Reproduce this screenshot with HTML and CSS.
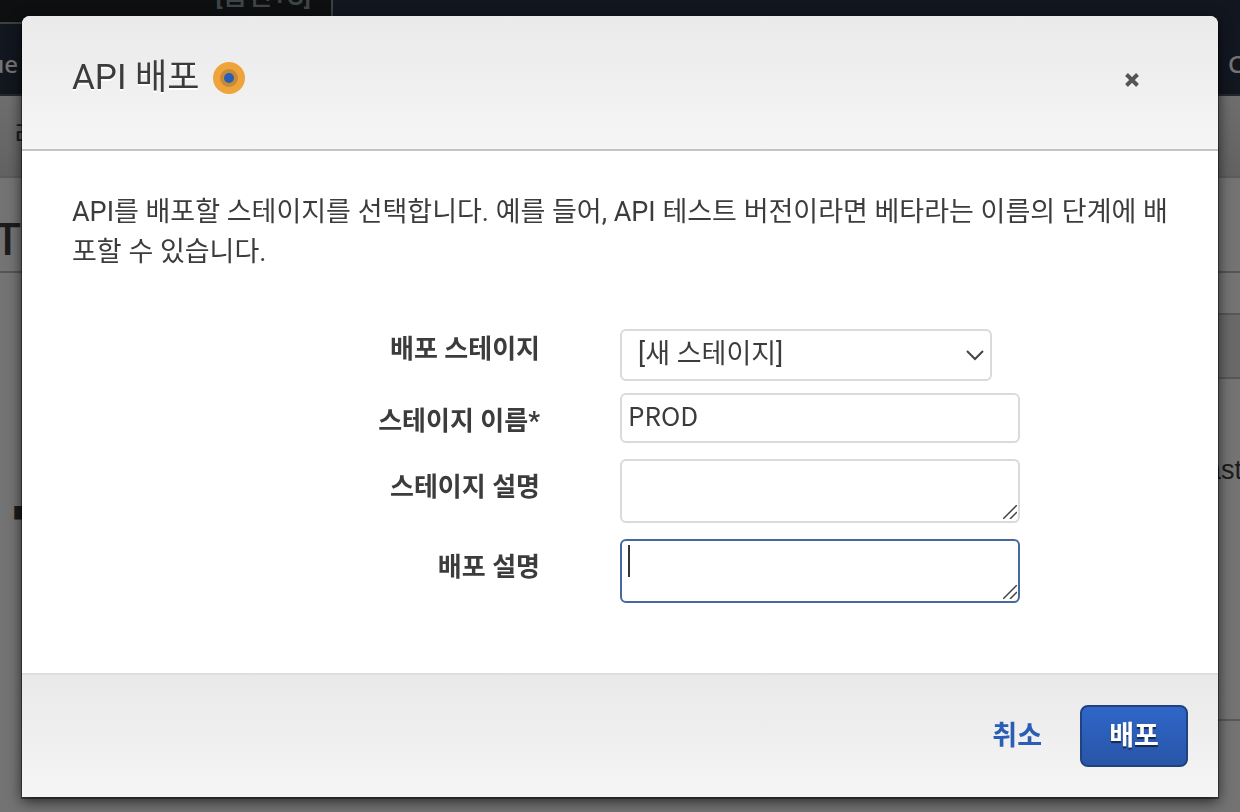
FILE: index.html
```html
<!DOCTYPE html>
<html lang="ko">
<head>
<meta charset="utf-8">
<title>API 배포</title>
<link rel="stylesheet" href="styles.css">
</head>
<body>
<div class="console">
  <div class="topbar">
    <div class="search"><span>[옵션+S]</span></div>
  </div>
  <div class="nav"><span class="nav-start">ue</span><span class="nav-end">C</span></div>
  <div class="toolbar"><span>리</span></div>
  <div class="titlebar"><span>T</span></div>
  <div class="columns">
    <div class="side"><span>▪</span></div>
    <div class="panel">
      <div class="panel-gap"></div>
      <div class="panel-head"></div>
      <div class="panel-body"><span>ast</span></div>
      <div class="panel-foot"></div>
    </div>
  </div>
</div>

<div class="overlay">
  <form class="dialog" role="dialog" aria-labelledby="dialog-title">
    <header class="dialog-header">
      <h1 id="dialog-title">API 배포</h1>
      <svg class="beacon" viewBox="0 0 32 32" aria-hidden="true">
        <circle cx="16" cy="16" r="16" fill="#eea43b"/>
        <circle cx="16" cy="16" r="9" fill="#c58b38"/>
        <circle cx="16" cy="16" r="5" fill="#2a5db4"/>
      </svg>
      <button class="close" type="button" aria-label="닫기">
        <svg viewBox="0 0 16 16" aria-hidden="true">
          <path d="M3 4l10 10M13 4L3 14" stroke="#fff" stroke-width="4"/>
          <path d="M2.500 2.500l11 11M13.500 2.500l-11 11" stroke="#555" stroke-width="4"/>
        </svg>
      </button>
    </header>
    <div class="dialog-body">
      <p class="intro">API를 배포할 스테이지를 선택합니다. 예를 들어, API 테스트 버전이라면 베타라는 이름의 단계에 배포할 수 있습니다.</p>
      <div class="fields">
        <div class="row row-select">
          <label for="stage">배포 스테이지</label>
          <div class="control select-wrap">
            <select id="stage"><option>[새 스테이지]</option></select>
            <svg class="chevron" viewBox="0 0 18 12" aria-hidden="true"><path d="M1 2l8 8 8-8" fill="none" stroke="#444" stroke-width="2"/></svg>
          </div>
        </div>
        <div class="row">
          <label for="name">스테이지 이름*</label>
          <div class="control"><input id="name" type="text" value="PROD"></div>
        </div>
        <div class="row">
          <label for="stage-desc">스테이지 설명</label>
          <div class="control">
            <textarea id="stage-desc"></textarea>
            <svg class="grip" viewBox="0 0 14 14" aria-hidden="true"><path d="M0 14L14 0M7 14l7-7" stroke="#444" stroke-width="1.500"/></svg>
          </div>
        </div>
        <div class="row">
          <label for="deploy-desc">배포 설명</label>
          <div class="control">
            <textarea id="deploy-desc" class="active"></textarea>
            <span class="caret"></span>
            <svg class="grip" viewBox="0 0 14 14" aria-hidden="true"><path d="M0 14L14 0M7 14l7-7" stroke="#444" stroke-width="1.500"/></svg>
          </div>
        </div>
      </div>
    </div>
    <footer class="dialog-footer">
      <button class="cancel" type="button">취소</button>
      <button class="deploy" type="submit">배포</button>
    </footer>
  </form>
</div>
</body>
</html>
```
FILE: styles.css
```css
* { box-sizing: border-box; }

body {
  margin: 0;
  height: 100vh;
  overflow: hidden;
  background: #737373;
  color: #3c3c3c;
  font: 27px/40px Roboto, "Noto Sans CJK KR", sans-serif;
}

/* Dimmed console behind the dialog */
.console {
  display: flex;
  flex-direction: column;
  height: 100%;
  color: #1c1c1c;
}
.topbar { height: 24px; flex: none; background: #12161f; }
.search {
  display: flex;
  align-items: flex-end;
  justify-content: flex-end;
  width: 333px;
  height: 24px;
  padding: 0 20px 10px 0;
  overflow: hidden;
  background: #0d0f10;
  border: solid #3b4041;
  border-width: 0 2px 2px 0;
  color: #3f4546;
  font-weight: 500;
  line-height: 32px;
}
.nav {
  display: flex;
  justify-content: space-between;
  flex: none;
  height: 72px;
  padding-top: 20px;
  background: #12161f;
  border-bottom: 2px solid #23262b;
  color: #747474;
  font-family: "Noto Sans", sans-serif;
  font-size: 24px;
  font-weight: 500;
}
.nav-start, .side { display: flex; justify-content: flex-end; }
.nav-start { width: 18px; }
.nav-end { width: 12px; }
.toolbar {
  flex: none;
  height: 82px;
  padding: 20px 0 0 14px;
  background: linear-gradient(#6e6e6e, #626262);
  border-bottom: 2px solid #5c5c5c;
}
.titlebar {
  flex: none;
  height: 95px;
  padding-top: 42px;
  border-bottom: 2px solid #555;
  font-size: 44px;
  font-weight: 500;
}
.titlebar span { display: flex; justify-content: flex-end; width: 21px; }
.columns { display: flex; justify-content: space-between; flex: 1; }
.side { width: 30px; padding-top: 218px; font-family: "DejaVu Sans", sans-serif; }
.panel { display: flex; flex-direction: column; width: 40px; }
.panel-gap { height: 42px; border-bottom: 2px solid #575757; }
.panel-head { height: 64px; background: #696969; border-bottom: 2px solid #575757; }
.panel-body { height: 342px; padding-top: 71px; padding-left: 6px; border-bottom: 2px solid #575757; font-family: "Liberation Sans", sans-serif; }
.panel-foot { flex: 1; }

/* Dialog */
.overlay { position: fixed; inset: 0; padding: 16px 22px; }
.dialog {
  background: #fff;
  border-radius: 8px 8px 0 0;
  box-shadow: 0 1px 0 1px rgba(0, 0, 0, .4), 0 4px 14px rgba(0, 0, 0, .7);
}
.dialog-header {
  display: flex;
  align-items: flex-start;
  height: 135px;
  padding: 40px 78px 0 50px;
  background: linear-gradient(#eaeaea, #f5f5f5);
  border-bottom: 2px solid #c4c4c4;
  border-radius: 8px 8px 0 0;
}
h1 {
  margin: 0;
  font-size: 35px;
  font-weight: normal;
  line-height: 44px;
  text-shadow: 0 2px 0 #fff;
}
.beacon { width: 32px; height: 32px; margin: 6px 0 0 13px; }
button { padding: 0; border: 0; background: none; font: inherit; cursor: pointer; }
.close { display: flex; margin: 16px 0 0 auto; }
.close svg { width: 16px; height: 16px; }
.dialog-body { padding: 41px 50px 70px; }
.intro { margin: 0 0 57px; }
.fields { display: flex; flex-direction: column; gap: 16px; }
.row { display: grid; grid-template-columns: 468fr 548fr; column-gap: 80px; align-items: start; }
.row-select { margin-bottom: -4px; }
label { padding-top: 8px; font-size: 26px; font-weight: bold; text-align: right; }
.row-select label { padding-top: 0; }
.control { display: flex; position: relative; width: 400px; max-width: 100%; }
.select-wrap { width: 372px; }
select, input, textarea {
  width: 100%;
  margin: 0;
  border: 2px solid #dadada;
  border-radius: 6px;
  outline: 0;
  background: #fff;
  color: #3c3c3c;
  font: inherit;
}
select { height: 52px; padding: 0 40px 2px 16px; appearance: none; }
input { height: 50px; padding: 0 6px 8px; font-family: "Noto Sans CJK KR", sans-serif; font-size: 26px; }
textarea { height: 64px; padding: 2px 6px; resize: none; }
textarea.active { border-color: #466a9f; }
.chevron { position: absolute; right: 8px; top: 20px; width: 18px; height: 12px; pointer-events: none; }
.grip { position: absolute; right: 3px; bottom: 4px; width: 14px; height: 14px; pointer-events: none; }
.caret { position: absolute; left: 8px; top: 6px; width: 2px; height: 32px; background: #333; }
.dialog-footer {
  display: flex;
  align-items: center;
  justify-content: flex-end;
  gap: 38px;
  padding: 30px;
  background: linear-gradient(#e9e9e9, #f5f5f5);
  border-top: 2px solid #dedede;
}
.cancel { color: #2a5db4; font-weight: bold; }
.deploy {
  width: 108px;
  height: 62px;
  border: 2px solid #21427e;
  border-radius: 8px;
  background: linear-gradient(#2f66c8, #2856a8);
  color: #fff;
  font-weight: bold;
  text-shadow: 0 2px 1px #142a52;
}
```
